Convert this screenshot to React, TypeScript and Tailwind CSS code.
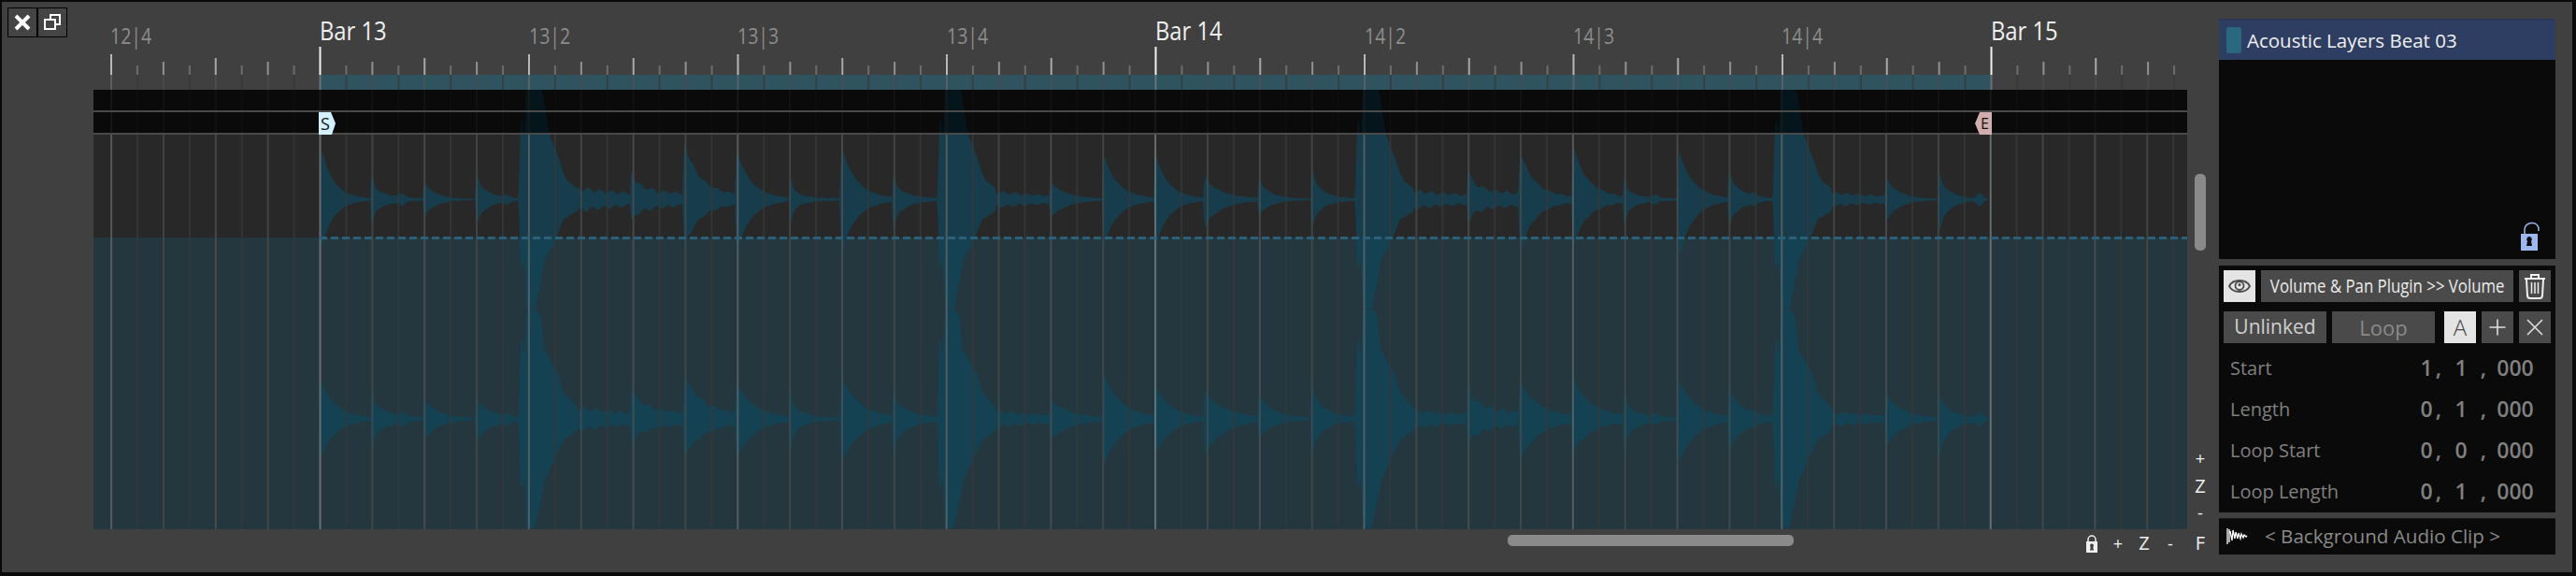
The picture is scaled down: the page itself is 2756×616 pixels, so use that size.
import React from "react";

const BAR_X = 342;
const TICK = 223.5 / 8;
const LINE = 223.4 / 8;
const sans = "font-['Open_Sans',sans-serif]";

// x, upper top, upper bottom, lower top, lower bottom, spike, tau, floor
const hits: number[][] = [
  [343, 67, 64, 47, 47, 0.15, 13, 0.8],
  [397, 48, 51, 58, 63, 0.72, 15, 1.5],
  [453, 23, 23, 27, 28, 0.2, 12, 0.8],
  [509, 38, 39, 35, 40, 0.45, 13, 1.2],
  [555, 0, 0, 0, 0, -1, 0, 12],
  [675, 36, 24, 45, 30, 0.6, 12, 10],
  [731, 67, 54, 47, 40, 0.15, 16, 7],
  [787, 62, 66, 43, 48, 0.1, 15, 1.5],
  [845, 40, 45, 52, 58, 0.7, 10, 2],
  [899, 68, 68, 53, 55, 0.12, 16, 1],
  [955, 46, 58, 57, 72, 0.65, 14, 1.5],
  [1003, 0, 0, 0, 0, -1, 0, 8],
  [1123, 20, 21, 22, 25, 0.1, 18, 0.8],
  [1180, 57, 58, 57, 58, 0.15, 15, 1.5],
  [1235, 60, 63, 42, 45, 0.15, 14, 1],
  [1288, 31, 39, 40, 52, 0.3, 17, 2],
  [1346, 28, 23, 35, 28, 0.3, 13, 1],
  [1403, 52, 49, 62, 62, 0.55, 12, 1.5],
  [1450, 0, 0, 0, 0, -1, 0, 9],
  [1570, 37, 24, 48, 33, 0.6, 12, 10],
  [1625, 58, 63, 43, 48, 0.1, 15, 4],
  [1682, 70, 60, 50, 40, 0.2, 15, 4],
  [1737, 37, 49, 48, 63, 0.7, 12, 2],
  [1795, 62, 74, 47, 53, 0.1, 15, 1],
  [1849, 42, 39, 50, 53, 0.4, 13, 1.5],
  [1897, 0, 0, 0, 0, -1, 0, 7],
  [2017, 28, 28, 33, 37, 0.2, 14, 0.8],
  [2074, 43, 54, 40, 63, 0.5, 12, 1],
];
const bumps = [[430, 4], [542, 3], [1771, 3], [1877, 3], [2118, 6]];

// envelope of the four loud hits, one table for each edge of the two channels
const bigTables = [
  [[0, 10], [2, 80], [4, 88], [5.5, 60], [8, 118], [25, 118], [33, 69], [42, 46], [48, 28], [52, 20], [62, 12]],
  [[0, 10], [2, 70], [4, 75], [5.5, 55], [8, 118], [18, 118], [23, 89], [28, 63], [38, 46], [48, 21], [62, 13]],
  [[0, 10], [2, 80], [4, 88], [5.5, 60], [8, 118], [18, 118], [23, 112], [27, 75], [42, 48], [48, 28], [62, 13]],
  [[0, 10], [2, 70], [4, 75], [5.5, 55], [8, 118], [17, 118], [28, 65], [38, 43], [48, 22], [62, 13]],
];

const lerpTable = (table: number[][], t: number) => {
  for (let i = 1; i < table.length; i++) {
    if (t <= table[i][0]) {
      const [t0, v0] = table[i - 1];
      const [t1, v1] = table[i];
      return v0 + ((v1 - v0) * (t - t0)) / (t1 - t0);
    }
  }
  return -1;
};

const amp = (px: number, slot: number) => {
  let hit = hits[0];
  for (const h of hits) if (h[0] <= px) hit = h;
  const t = px - hit[0];
  const [x, , , , , spike, tauBase, floor] = hit;
  const tau = slot >= 2 ? tauBase * 1.25 : tauBase;
  const ripple = 1 + 0.22 * Math.sin(t * 0.5 + x + slot);
  let a: number;
  if (spike < 0) {
    const v = lerpTable(bigTables[slot], t);
    const tail = floor * Math.exp(-(t - 62) / 90) * ripple;
    a = v >= 0 ? Math.max(v, 0) : tail;
  } else {
    const p = hit[slot + 1];
    const rise = Math.min(1, (t + 1) / 2.5);
    a = rise * p * (spike * Math.exp(-t / 1.8) + (1 - spike) * Math.exp(-t / tau)) + floor * Math.exp(-t / 120) * ripple;
  }
  for (const [bx, ba] of bumps) a += ba * Math.exp(-(((px - bx) / 4) ** 2));
  return Math.min(a, 117);
};

const channelPath = (center: number, topSlot: number, bottomSlot: number) => {
  const top: string[] = [];
  const bottom: string[] = [];
  for (let px = 343; px <= 2127; px++) {
    top.push(`${px},${(center - amp(px, topSlot)).toFixed(1)}`);
    bottom.unshift(`${px},${(center + amp(px, bottomSlot)).toFixed(1)}`);
  }
  return `M${top.join("L")}L${bottom.join("L")}Z`;
};

const waveD = channelPath(213.3, 0, 1) + channelPath(448, 2, 3);

const ticks = Array.from({ length: 80 }, (_, i) => i - 8)
  .map((i) => ({ i, x: BAR_X + i * TICK, lx: BAR_X + i * LINE }))
  .filter((t) => t.x > 100 && t.x < 2340);

const kind = (i: number) => {
  const n = ((i % 64) + 64) % 64;
  if (n % 32 === 0) return 0;
  if (n % 8 === 0) return 1;
  if (n % 4 === 0) return 2;
  if (n % 2 === 0) return 3;
  return 4;
};

const tickTop = [50, 58, 62, 66, 70];
const tickColor = ["#f0f0f0", "#b8b8b8", "#a8a8a8", "#909090", "#6c6c6c"];
const lineColor = ["#7c8487", "#666a6c", "#505354", "#4a4d4e", "#363a3b"];
const lineOnBlack = ["#1c1c1c", "#1a1a1a", "#141414", "#141414", "#0f0f0f"];

const labels = [
  { x: 118, text: "12|4", bar: false },
  { x: 342, text: "Bar 13", bar: true },
  { x: 566, text: "13|2", bar: false },
  { x: 789, text: "13|3", bar: false },
  { x: 1013, text: "13|4", bar: false },
  { x: 1236, text: "Bar 14", bar: true },
  { x: 1460, text: "14|2", bar: false },
  { x: 1683, text: "14|3", bar: false },
  { x: 1906, text: "14|4", bar: false },
  { x: 2130, text: "Bar 15", bar: true },
];

const Timeline = () => (
  <div className="relative h-full w-[2240px]">
    <svg width="2240" height="564" viewBox="100 2 2240 564" className="block">
      <defs>
        <clipPath id="inBlack">
          <rect x="100" y="96" width="2240" height="48" />
        </clipPath>
        <clipPath id="inTrack">
          <rect x="100" y="144" width="2240" height="422" />
        </clipPath>
      </defs>
      <rect x="342" y="80" width="1788" height="16" fill="#2f535f" />
      <rect x="100" y="96" width="2240" height="22" fill="#0a0a0a" />
      <rect x="100" y="120" width="2240" height="22" fill="#0a0a0a" />
      <rect x="100" y="144" width="2240" height="110" fill="#282828" />
      <rect x="100" y="254" width="2240" height="312" fill="#24373e" />
      <path d={waveD} fill="#04161c" clipPath="url(#inBlack)" />
      <path d={waveD} fill="#0c4a62" fillOpacity="0.6" clipPath="url(#inTrack)" />
      {ticks.map((t) => {
        const k = kind(t.i);
        return (
          <g key={t.i}>
            <rect x={t.lx - 0.5} y={96} width={2} height={46} fill={lineOnBlack[k]} opacity={0.8} />
            <rect x={t.lx - 0.5} y={144} width={2} height={422} fill={lineColor[k]} opacity={0.75} />
            <rect x={t.x - 0.5} y={80} width={2} height={16} fill={lineColor[k]} opacity={0.7} />
            <rect x={t.x - 0.5} y={tickTop[k]} width={2} height={80 - tickTop[k]} fill={tickColor[k]} />
          </g>
        );
      })}
      <rect x="100" y="118" width="2240" height="2" fill="#4a4a4a" />
      <rect x="100" y="142" width="2240" height="2" fill="#4a4a4a" />
      <line x1="342" y1="254.5" x2="2340" y2="254.5" stroke="#2c6078" strokeWidth="3" strokeDasharray="8 4" />
    </svg>
    {labels.map((l) =>
      l.bar ? (
        <span
          key={l.text}
          className={`${sans} absolute top-[11px] origin-left scale-x-[0.85] text-[28px] leading-[38px] text-[#f0f0f0] whitespace-nowrap`}
          style={{ left: l.x - 100 }}
        >
          {l.text}
        </span>
      ) : (
        <span
          key={l.text}
          className={`${sans} absolute top-[20px] origin-left scale-x-[0.85] text-[23px] leading-[32px] text-[#8c8c8c] whitespace-nowrap`}
          style={{ left: l.x - 100 }}
        >
          {l.text}
        </span>
      )
    )}
    <div className={`${sans} absolute left-[241px] top-[118px] flex h-[24px] w-[18px] items-center pl-[2px] text-[18px] text-[#111] bg-[#d2f1fc] [clip-path:polygon(0_0,13px_0,18px_50%,14px_100%,0_100%)]`}>
      S
    </div>
    <div className={`${sans} absolute left-[2013px] top-[118px] flex h-[24px] w-[18px] items-center justify-end pr-[3px] text-[16px] text-[#111] bg-[#d1adad] [clip-path:polygon(5px_0,100%_0,100%_100%,5px_100%,0_50%)]`}>
      E
    </div>
  </div>
);

const CornerButton = ({ children }: { children: React.ReactNode }) => (
  <button className="flex h-[32px] w-[32px] items-center justify-center border border-black bg-[#444444]">{children}</button>
);

const PanelButton = ({ children, w, active, className }: { children: React.ReactNode; w: string; active?: boolean; className?: string }) => (
  <button className={`flex h-[34px] items-center justify-center ${w} ${active ? "bg-[#e4e4e4]" : "bg-[#4a4a4a]"} ${className ?? ""}`}>
    {children}
  </button>
);

const Eye = () => (
  <svg width="24" height="18" viewBox="0 0 24 18" fill="none" stroke="#4a4a4a" strokeWidth="1.8">
    <path d="M1 9 C5 1 19 1 23 9 C19 17 5 17 1 9Z" />
    <circle cx="12" cy="8.5" r="4.5" />
    <circle cx="12" cy="7.5" r="1.5" fill="#4a4a4a" stroke="none" />
  </svg>
);

const Trash = () => (
  <svg width="24" height="28" viewBox="0 0 24 28" fill="none" stroke="#f0f0f0" strokeWidth="2">
    <path d="M1 6h22M8 5V2h8v3" />
    <path d="M3 7l1 17c0 2 1 3 3 3h10c2 0 3-1 3-3l1-17" />
    <path d="M8.500 10v12M12 10v12M15.500 10v12" strokeWidth="1.5" />
  </svg>
);

const OpenLock = () => (
  <svg width="22" height="34" viewBox="0 0 22 34" className="block">
    <path d="M5 14 V9 C5 2 18 -1 20 8 V11" fill="none" stroke="#9db8f0" strokeWidth="1.5" />
    <path fillRule="evenodd" d="M1 14h18v18H1Z M10 17a3 3 0 0 0-2 5l-1 5h6l-1-5a3 3 0 0 0-2-5Z" fill="#9db8f0" />
  </svg>
);

const ClosedLock = () => (
  <svg width="14" height="20" viewBox="0 0 14 20" className="block">
    <path d="M3 9V6a4 4 0 0 1 8 0v3" fill="none" stroke="#f0f0f0" strokeWidth="1.5" />
    <path fillRule="evenodd" d="M1 8h12v12H1Z M7 10.500a2 2 0 0 0-1.300 3.500l-.7 3.500h4l-.7-3.500A2 2 0 0 0 7 10.500Z" fill="#f0f0f0" />
  </svg>
);

const rows = [
  { label: "Start", a: "1", b: "1" },
  { label: "Length", a: "0", b: "1" },
  { label: "Loop Start", a: "0", b: "0" },
  { label: "Loop Length", a: "0", b: "1" },
];

const App = () => {
  return (
    <div className={`${sans} h-[616px] w-[2756px] overflow-hidden bg-[#0a0a0a] pb-[4px] pl-[2px] pr-[4px] pt-[2px]`}>
      <div className="flex h-full bg-[#404040]">
        {/* Corner buttons */}
        <div className="w-[98px] shrink-0 pl-[6px] pt-[6px]">
          <div className="flex">
            <CornerButton>
              <svg width="18" height="18" viewBox="0 0 18 18" stroke="#fff" strokeWidth="4">
                <path d="M2 2l14 14M16 2L2 16" />
              </svg>
            </CornerButton>
            <CornerButton>
              <svg width="20" height="18" viewBox="0 0 20 18" fill="none" stroke="#fff" strokeWidth="2">
                <path d="M8 5V1h10v10h-5" />
                <rect x="2" y="6" width="11" height="10" />
              </svg>
            </CornerButton>
          </div>
        </div>

        <div className="flex w-[2274px] shrink-0 flex-col">
          <div className="flex h-[564px]">
            <Timeline />
            <div className="flex w-[34px] flex-col">
              <div className="ml-[8px] mt-[184px] h-[82px] w-[12px] rounded-[5px] bg-[#8a8a8a]" />
              <div className="mb-[3px] mt-auto flex w-[28px] flex-col items-center text-[#f0f0f0]">
                <span className="flex h-[29px] items-center text-[18px]">+</span>
                <span className="flex h-[29px] items-center text-[20px]">Z</span>
                <span className="flex h-[29px] items-center text-[18px]">-</span>
              </div>
            </div>
          </div>
          <div className="flex h-[30px] items-center text-[#f0f0f0]">
            <div className="mb-[6px] ml-[1513px] h-[12px] w-[306px] rounded-[5px] bg-[#8a8a8a]" />
            <div className="ml-[305px] flex w-[28px] justify-center">
              <ClosedLock />
            </div>
            <span className="w-[28px] text-center text-[18px]">+</span>
            <span className="w-[28px] text-center text-[20px]">Z</span>
            <span className="w-[28px] text-center text-[18px]">-</span>
            <span className="ml-[4px] w-[28px] text-center text-[20px]">F</span>
          </div>
        </div>

        {/* Right panel */}
        <div className="flex w-[360px] shrink-0 flex-col pt-[18px]">
          <div className="flex h-[257px] flex-col bg-[#0a0a0a]">
            <div className="flex h-[44px] items-center border-t-2 border-[#2a3759] bg-[#2e3d62] pl-[8px]">
              <div className="h-[28px] w-[16px] rounded-[3px] bg-[#2a6880]" />
              <span className="ml-[6px] text-[20.5px] text-[#f0f0f0]">Acoustic Layers Beat 03</span>
            </div>
            <div className="mt-auto flex justify-end pb-[7px] pr-[16px]">
              <OpenLock />
            </div>
          </div>

          <div className="mt-[7px] h-[264px] bg-[#0a0a0a] px-[5px] pt-[5px]">
            <div className="flex gap-[6px]">
              <PanelButton w="w-[34px]" active>
                <Eye />
              </PanelButton>
              <PanelButton w="w-[270px]">
                <span className="origin-center scale-x-[0.84] whitespace-nowrap text-[20px] text-[#ececec]">Volume &amp; Pan Plugin &gt;&gt; Volume</span>
              </PanelButton>
              <PanelButton w="w-[34px]">
                <Trash />
              </PanelButton>
            </div>
            <div className="mt-[10px] flex gap-[6px]">
              <PanelButton w="w-[110px]">
                <span className="text-[21px] text-[#d0d0d0]">Unlinked</span>
              </PanelButton>
              <PanelButton w="w-[110px]">
                <span className="text-[22px] text-[#8a8a8a]">Loop</span>
              </PanelButton>
              <PanelButton w="w-[34px]" active className="ml-[4px]">
                <span className="text-[24px] font-light text-[#4a4a4a]">A</span>
              </PanelButton>
              <PanelButton w="w-[34px]">
                <svg width="20" height="20" viewBox="0 0 20 20" stroke="#e0e0e0" strokeWidth="1.6">
                  <path d="M10 1.500v17M1.500 10h17" />
                </svg>
              </PanelButton>
              <PanelButton w="w-[34px]">
                <svg width="20" height="20" viewBox="0 0 20 20" stroke="#e0e0e0" strokeWidth="1.6">
                  <path d="M2 2l16 16M18 2L2 18" />
                </svg>
              </PanelButton>
            </div>
            <div className="mt-[5px]">
              {rows.map((r) => (
                <div key={r.label} className="flex h-[44px] items-center pl-[7px] pr-[18px] text-[#808080]">
                  <span className="text-[20px]">{r.label}</span>
                  <span className="mb-[2px] ml-auto flex items-center text-[23px] font-semibold leading-none">
                    <span className="w-[14px] text-center">{r.a}</span>
                    <span className="w-[12px] text-center">,</span>
                    <span className="w-[36px] text-center">{r.b}</span>
                    <span className="w-[12px] text-center">,</span>
                    <span className="ml-[8px] w-[40px] text-center">000</span>
                  </span>
                </div>
              ))}
            </div>
          </div>

          <div className="mt-[6px] flex h-[39px] items-center border-t border-[#1c1c1c] bg-[#0a0a0a] pb-[2px] pl-[8px]">
            <svg width="24" height="18" viewBox="0 0 24 18" className="shrink-0" stroke="#fff" fill="none">
              <path d="M1 1v17M3 2v14M4 4l2 10 1-11 2 9 1-7 2 7 1-6 2 6 1-5 2 4 1-3 2 2 1-1" strokeWidth="1.3" />
            </svg>
            <span className="ml-[17px] text-[20.6px] text-[#8a8a8a]">&lt; Background Audio Clip &gt;</span>
          </div>
        </div>
      </div>
    </div>
  );
};

export default App;
